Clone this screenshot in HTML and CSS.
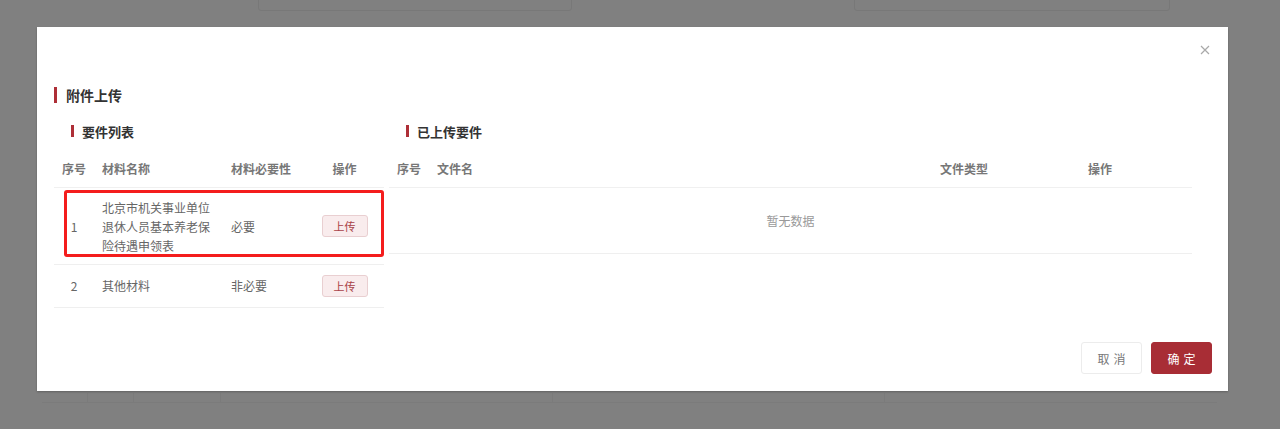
FILE: index.html
```html
<!DOCTYPE html>
<html lang="zh-CN">
<head>
  <meta charset="UTF-8">
  <meta name="viewport" content="width=device-width, initial-scale=1.0">
  <title>附件上传</title>
  <link rel="stylesheet" href="styles.css">
</head>
<body>

  <!-- page behind the mask -->
  <div class="page">
    <div class="page-top">
      <div class="ghost-box box-a"></div>
      <div class="ghost-box box-b"></div>
    </div>
    <div class="ghost-table">
      <span class="c1"></span><span class="c2"></span><span class="c3"></span><span class="c4"></span><span class="c5"></span>
    </div>
  </div>

  <div class="dialog">
    <span class="dialog-close">
      <svg width="10" height="10" viewBox="0 0 10 10"><path d="M1 1L9 9M9 1L1 9" stroke="#a9a9a9" stroke-width="1.2" fill="none"/></svg>
    </span>

    <div class="dialog-body">
      <h3 class="title">附件上传</h3>

      <div class="panels">
        <div class="panel panel-left">
          <h4 class="sub">要件列表</h4>
          <div class="table-wrap">
            <table class="grid">
              <colgroup>
                <col style="width:40px"><col style="width:129px"><col style="width:82px"><col>
              </colgroup>
              <thead>
                <tr><th class="center">序号</th><th>材料名称</th><th>材料必要性</th><th class="center">操作</th></tr>
              </thead>
              <tbody>
                <tr>
                  <td class="center">1</td>
                  <td>北京市机关事业单位退休人员基本养老保险待遇申领表</td>
                  <td>必要</td>
                  <td class="center"><button class="btn-upload">上传</button></td>
                </tr>
                <tr>
                  <td class="center">2</td>
                  <td>其他材料</td>
                  <td>非必要</td>
                  <td class="center"><button class="btn-upload">上传</button></td>
                </tr>
              </tbody>
            </table>
            <div class="mark"></div>
          </div>
        </div>

        <div class="panel panel-right">
          <h4 class="sub">已上传要件</h4>
          <table class="grid">
            <colgroup>
              <col style="width:40px"><col><col style="width:88px"><col style="width:184px">
            </colgroup>
            <thead>
              <tr><th class="center">序号</th><th>文件名</th><th class="center">文件类型</th><th class="center">操作</th></tr>
            </thead>
            <tbody>
              <tr><td colspan="4" class="empty">暂无数据</td></tr>
            </tbody>
          </table>
        </div>
      </div>
    </div>

    <div class="dialog-footer">
      <button class="btn btn-cancel">取消</button>
      <button class="btn btn-ok">确定</button>
    </div>
  </div>

</body>
</html>
```

FILE: styles.css
```css
html, body {
  margin: 0;
  padding: 0;
}

body {
  font-family: "Noto Sans CJK SC", "Noto Sans", sans-serif;
  background-color: #808080;
  width: 1280px;
  height: 429px;
  overflow: hidden;
  position: relative;
}

/* faint page under the mask */
.page-top {
  display: flex;
  padding-left: 258px;
  gap: 282px;
}
.ghost-box {
  height: 14px;
  margin-top: -5px;
  border: 1px solid #787878;
  border-radius: 3px;
}
.box-a { width: 312px; }
.box-b { width: 314px; }

.ghost-table {
  display: flex;
  margin: 382px 0 0 42px;
  width: 1175px;
  height: 9px;
  border-bottom: 1px solid #7b7b7b;
}
.ghost-table span {
  border-right: 1px solid #7b7b7b;
}
.ghost-table .c1 { width: 45px; }
.ghost-table .c2 { width: 45px; }
.ghost-table .c3 { width: 86px; }
.ghost-table .c4 { width: 331px; }
.ghost-table .c5 { width: 331px; }

/* dialog */
.dialog {
  position: absolute;
  left: 37px;
  top: 27px;
  width: 1191px;
  height: 364px;
  background: #fff;
  box-shadow: 0 1px 2px rgba(0, 0, 0, 0.25);
  display: flex;
  flex-direction: column;
}

.dialog-close {
  position: absolute;
  top: 18px;
  right: 18px;
  width: 10px;
  height: 10px;
  display: flex;
}

.dialog-body {
  padding: 55px 36px 0 17px;
}

.title {
  margin: 0;
  display: flex;
  align-items: center;
  height: 26px;
  font-size: 14px;
  font-weight: bold;
  color: #333;
}
.title::before {
  content: "";
  width: 3px;
  height: 16px;
  background: #ae2f37;
  margin-right: 9px;
}

.panels {
  display: flex;
  gap: 5px;
  margin-top: 13px;
}
.panel-left { width: 330px; }
.panel-right { flex: 1; }

.sub {
  margin: 0 0 9px;
  padding-left: 17px;
  display: flex;
  align-items: center;
  height: 20px;
  font-size: 13px;
  font-weight: bold;
  color: #333;
}
.sub::before {
  content: "";
  width: 3px;
  height: 12px;
  background: #ae2f37;
  margin-right: 8px;
}

.table-wrap { position: relative; }

.grid {
  width: 100%;
  border-collapse: collapse;
  table-layout: fixed;
  font-size: 12px;
  color: #666;
}
.grid th {
  text-align: left;
  font-weight: bold;
  color: #777;
  padding: 9px 8px;
  line-height: 19px;
  border-bottom: 1px solid #f0f0f0;
}
.grid td {
  padding: 9.5px 8px;
  line-height: 19px;
  border-bottom: 1px solid #efefef;
  vertical-align: middle;
}
.grid .center { text-align: center; }

.grid .empty {
  height: 46px;
  text-align: center;
  color: #999;
  padding-left: 0;
  padding-right: 0;
}

.btn-upload {
  font-family: inherit;
  width: 46px;
  height: 22px;
  padding: 0;
  font-size: 11px;
  color: #a94248;
  background: #f9eced;
  border: 1px solid #e9cfd1;
  border-radius: 3px;
  vertical-align: middle;
}

.mark {
  position: absolute;
  left: 10px;
  top: 40px;
  width: 314px;
  height: 61px;
  border: 3px solid #f41d1d;
  border-radius: 3px;
}

.dialog-footer {
  margin-top: auto;
  display: flex;
  justify-content: flex-end;
  gap: 9px;
  padding: 0 16px 17px;
}

.btn {
  font-family: inherit;
  width: 61px;
  height: 32px;
  padding: 0;
  font-size: 12px;
  letter-spacing: 4px;
  text-indent: 4px;
  border-radius: 3px;
}
.btn-cancel {
  background: #fff;
  color: #777;
  border: 1px solid #ececec;
}
.btn-ok {
  background: #a82d35;
  color: #fff;
  border: 1px solid #a82d35;
}
```
